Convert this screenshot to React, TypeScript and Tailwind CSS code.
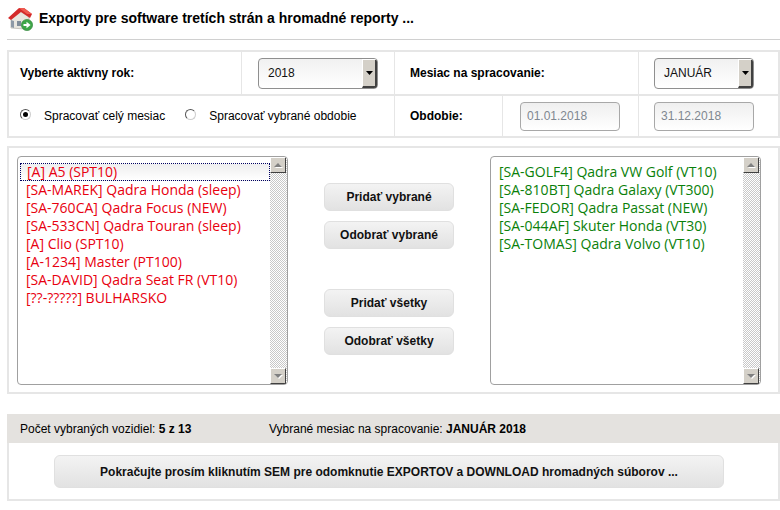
import React from 'react';

const leftItems = [
  '[A] A5 (SPT10)',
  '[SA-MAREK] Qadra Honda (sleep)',
  '[SA-760CA] Qadra Focus (NEW)',
  '[SA-533CN] Qadra Touran (sleep)',
  '[A] Clio (SPT10)',
  '[A-1234] Master (PT100)',
  '[SA-DAVID] Qadra Seat FR (VT10)',
  '[??-?????] BULHARSKO',
];

const rightItems = [
  '[SA-GOLF4] Qadra VW Golf (VT10)',
  '[SA-810BT] Qadra Galaxy (VT300)',
  '[SA-FEDOR] Qadra Passat (NEW)',
  '[SA-044AF] Skuter Honda (VT30)',
  '[SA-TOMAS] Qadra Volvo (VT10)',
];

const HouseIcon = () => (
  <svg width="26" height="24" viewBox="0 0 26 24">
    <path d="M4 11 L4 21 L18 22 L22 18 L22 10 L13 4 Z" fill="#e8e6df" stroke="#a9a69c" strokeWidth="0.6" />
    <path d="M4 13 L7 14 L7 21 L4 20 Z" fill="#8d99a6" />
    <rect x="10" y="14" width="4" height="5" fill="#7f8c99" />
    <path d="M1 11 L12 1 L17 1 L25 7 L23 11 L14 5 L4 13 Z" fill="#d42a2a" />
    <path d="M12 1 L17 1 L25 7 L20 7 Z" fill="#ee5a50" />
    <circle cx="20" cy="18" r="5.6" fill="#3fa648" stroke="#2c7f36" strokeWidth="0.6" />
    <path d="M16.5 17 H19.5 V14.8 L23.6 18 L19.5 21.2 V19 H16.5 Z" fill="#fff" />
  </svg>
);

const SelectBox = ({ value, className }: { value: string; className: string }) => (
  <div className={`flex h-[31px] items-stretch overflow-hidden rounded-[4px] border border-[#8f8f8f] bg-gradient-to-b from-[#f1f1f1] to-white pl-[9px] ${className}`}>
    <span className="flex-1 self-center text-[12px] text-[#111]">{value}</span>
    <span className="flex w-[15px] items-center justify-center border-t border-l border-t-white border-l-white border-b-2 border-r-2 border-b-[#404040] border-r-[#404040] bg-[#d4d0c8]">
      <svg width="7" height="4" viewBox="0 0 7 4"><path d="M0 0 H7 L3.5 4 Z" fill="#000" /></svg>
    </span>
  </div>
);

const DateBox = ({ value }: { value: string }) => (
  <input
    readOnly
    value={value}
    className="h-[29px] w-[100px] rounded-[4px] border border-[#a8a8a8] bg-gradient-to-b from-[#efefef] to-white px-[6px] text-[12px] text-[#7f8790] outline-none"
  />
);

const Radio = ({ checked }: { checked?: boolean }) => (
  <span className="flex h-[11px] w-[11px] items-center justify-center rounded-full border border-t-[#555] border-l-[#555] border-r-[#ccc] border-b-[#ccc] bg-white">
    {checked && <span className="h-[5px] w-[5px] rounded-full bg-black" />}
  </span>
);

const ScrollButton = ({ up }: { up?: boolean }) => (
  <span className="flex h-[16px] w-[16px] items-center justify-center border border-t-white border-l-white border-r-[#404040] border-b-[#404040] bg-[#d4d0c8]">
    <svg width="9" height="6" viewBox="0 0 9 6">
      {up ? (
        <>
          <path d="M1 6 L9 6 L5 2 Z" fill="#fff" />
          <path d="M0 5 H8 L4 1 Z" fill="#808080" />
        </>
      ) : (
        <>
          <path d="M1 2 H9 L5 6 Z" fill="#fff" />
          <path d="M0 1 H8 L4 5 Z" fill="#808080" />
        </>
      )}
    </svg>
  </span>
);

const ListBox = ({ items, color, focusFirst }: { items: string[]; color: string; focusFirst?: boolean }) => (
  <div className="flex h-[229px] w-[271px] overflow-hidden rounded-[4px] border border-[#a0a0a0]">
    <div className={`min-w-0 flex-1 pt-[6px] pl-[2px] text-[14px] leading-[18px] ${color} font-['Open_Sans','Noto_Sans',sans-serif]`}>
      {items.map((item, index) => (
        <div
          key={item}
          className={`h-[18px] whitespace-nowrap pl-[6px] ${focusFirst && index === 0 ? 'border border-dotted border-[#000060] bg-gradient-to-b from-[#eeeeee] to-white pl-[5px] leading-[16px]' : ''}`}
        >
          {item}
        </div>
      ))}
    </div>
    <div className="flex w-[17px] flex-col justify-between bg-[repeating-conic-gradient(#c8c8c8_0_25%,#ffffff_0_50%)] bg-[length:2px_2px]">
      <ScrollButton up />
      <ScrollButton />
    </div>
  </div>
);

const ActionButton = ({ label, className }: { label: string; className: string }) => (
  <button className={`rounded-[6px] border border-[#e0e0e0] bg-gradient-to-b from-[#f3f3f3] to-[#e2e2e2] text-[12px] font-bold text-[#111] ${className}`}>
    {label}
  </button>
);

export default function App() {
  return (
    <div className="h-[510px] w-[780px] overflow-hidden bg-white font-['Liberation_Sans',Arial,sans-serif] text-[12px] text-black">
      {/* header */}
      <div className="ml-[7px] flex h-[40px] items-center gap-[6px] border-b border-[#d0d0d0] pb-[2px]">
        <HouseIcon />
        <h1 className="text-[14px] font-bold">Exporty pre software tretích strán a hromadné reporty ...</h1>
      </div>

      {/* settings table */}
      <div className="mt-[10px] ml-[7px] border-2 border-[#e6e6e6]">
        <div className="flex h-[44px] border-b-2 border-[#e6e6e6]">
          <div className="flex w-[233px] items-center border-r border-[#e6e6e6] pl-[11px] font-bold">Vyberte aktívny rok:</div>
          <div className="flex w-[153px] items-center border-r border-[#e6e6e6] pl-[16px]">
            <SelectBox value="2018" className="w-[120px]" />
          </div>
          <div className="flex w-[244px] items-center border-r border-[#e6e6e6] pl-[15px] font-bold">Mesiac na spracovanie:</div>
          <div className="flex flex-1 items-center pl-[15px]">
            <SelectBox value="JANUÁR" className="w-[100px]" />
          </div>
        </div>
        <div className="flex h-[40px]">
          <div className="flex w-[386px] items-center border-r border-[#e6e6e6] pl-[11px]">
            <span className="-mt-[3px]"><Radio checked /></span>
            <span className="ml-[13px]">Spracovať celý mesiac</span>
            <span className="-mt-[3px] ml-[20px]"><Radio /></span>
            <span className="ml-[13px]">Spracovať vybrané obdobie</span>
          </div>
          <div className="flex w-[108px] items-center border-r border-[#e6e6e6] pl-[15px] font-bold">Obdobie:</div>
          <div className="flex w-[136px] items-center border-r border-[#e6e6e6] pl-[17px]">
            <DateBox value="01.01.2018" />
          </div>
          <div className="flex flex-1 items-center pl-[15px]">
            <DateBox value="31.12.2018" />
          </div>
        </div>
      </div>

      {/* vehicle lists */}
      <div className="mt-[8px] ml-[7px] flex h-[248px] justify-between border-2 border-[#e6e6e6] pt-[8px] pr-[17px] pl-[8px]">
        <ListBox items={leftItems} color="text-[#e8000f]" focusFirst />
        <div className="flex flex-col items-center pt-[27px]">
          <ActionButton label="Pridať vybrané" className="h-[28px] w-[130px]" />
          <ActionButton label="Odobrať vybrané" className="mt-[10px] h-[28px] w-[130px]" />
          <ActionButton label="Pridať všetky" className="mt-[40px] h-[28px] w-[130px]" />
          <ActionButton label="Odobrať všetky" className="mt-[10px] h-[28px] w-[130px]" />
        </div>
        <ListBox items={rightItems} color="text-[#0a7f0a]" />
      </div>

      {/* summary */}
      <div className="mt-[20px] ml-[7px] border-2 border-t-0 border-[#e6e6e6]">
        <div className="-mx-[2px] flex h-[29px] items-center bg-[#e4e2df] pl-[13px]">
          <span className="w-[249px]">Počet vybraných vozidiel: <b>5 z 13</b></span>
          <span>Vybrané mesiac na spracovanie: <b>JANUÁR 2018</b></span>
        </div>
        <div className="flex h-[56px] items-start pt-[12px] pl-[45px]">
          <ActionButton label="Pokračujte prosím kliknutím SEM pre odomknutie EXPORTOV a DOWNLOAD hromadných súborov ..." className="h-[33px] w-[670px]" />
        </div>
      </div>
    </div>
  );
}
